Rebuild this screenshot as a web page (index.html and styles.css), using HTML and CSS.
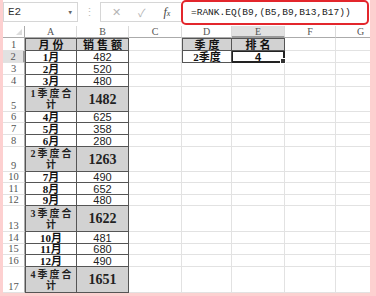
FILE: index.html
```html
<!DOCTYPE html>
<html lang="zh-CN">

<head>
    <meta charset="UTF-8">
    <title>RANK.EQ</title>
    <link rel="stylesheet" href="styles.css">
</head>

<body>
    <div class="frame">
        <div class="bar">
            <div class="namebox">E2<span class="arrow">▾</span></div>
            <div class="dots">⋮</div>
            <div class="fnbox">
                <span class="x">✕</span>
                <span class="ok">✓</span>
                <span class="fx">f<small>x</small></span>
            </div>
            <div class="formula">=RANK.EQ(B9,(B5,B9,B13,B17))</div>
        </div>

        <div class="sheet">
            <!-- header -->
            <div class="c hd corner"></div>
            <div class="c hd">A</div>
            <div class="c hd">B</div>
            <div class="c hd">C</div>
            <div class="c hd">D</div>
            <div class="c hd on">E</div>
            <div class="c hd">F</div>
            <div class="c hd">G</div>

            <div class="c rh">1</div>
            <div class="c t tl tt g cn"><span class="wide">月份</span></div>
            <div class="c t tt g cn"><span class="wide">销售额</span></div>
            <div class="c"></div>
            <div class="c t tl tt g cn"><span class="wide">季度</span></div>
            <div class="c t tt g cn"><span class="wide">排名</span></div>
            <div class="c"></div>
            <div class="c"></div>

            <div class="c rh on">2</div>
            <div class="c t tl cn">1月</div>
            <div class="c t num">482</div>
            <div class="c"></div>
            <div class="c t tl cn">2季度</div>
            <div class="c t num bold sel">4</div>
            <div class="c"></div>
            <div class="c"></div>

            <div class="c rh">3</div>
            <div class="c t tl cn">2月</div>
            <div class="c t num">520</div>
            <div class="c"></div>
            <div class="c"></div>
            <div class="c"></div>
            <div class="c"></div>
            <div class="c"></div>

            <div class="c rh">4</div>
            <div class="c t tl cn">3月</div>
            <div class="c t num">480</div>
            <div class="c"></div>
            <div class="c"></div>
            <div class="c"></div>
            <div class="c"></div>
            <div class="c"></div>

            <div class="c rh">5</div>
            <div class="c t tl g q"><span class="wide">1季度合</span><span>计</span></div>
            <div class="c t g tot">1482</div>
            <div class="c"></div>
            <div class="c"></div>
            <div class="c"></div>
            <div class="c"></div>
            <div class="c"></div>

            <div class="c rh">6</div>
            <div class="c t tl cn">4月</div>
            <div class="c t num">625</div>
            <div class="c"></div>
            <div class="c"></div>
            <div class="c"></div>
            <div class="c"></div>
            <div class="c"></div>

            <div class="c rh">7</div>
            <div class="c t tl cn">5月</div>
            <div class="c t num">358</div>
            <div class="c"></div>
            <div class="c"></div>
            <div class="c"></div>
            <div class="c"></div>
            <div class="c"></div>

            <div class="c rh">8</div>
            <div class="c t tl cn">6月</div>
            <div class="c t num">280</div>
            <div class="c"></div>
            <div class="c"></div>
            <div class="c"></div>
            <div class="c"></div>
            <div class="c"></div>

            <div class="c rh">9</div>
            <div class="c t tl g q"><span class="wide">2季度合</span><span>计</span></div>
            <div class="c t g tot">1263</div>
            <div class="c"></div>
            <div class="c"></div>
            <div class="c"></div>
            <div class="c"></div>
            <div class="c"></div>

            <div class="c rh">10</div>
            <div class="c t tl cn">7月</div>
            <div class="c t num">490</div>
            <div class="c"></div>
            <div class="c"></div>
            <div class="c"></div>
            <div class="c"></div>
            <div class="c"></div>

            <div class="c rh">11</div>
            <div class="c t tl cn">8月</div>
            <div class="c t num">652</div>
            <div class="c"></div>
            <div class="c"></div>
            <div class="c"></div>
            <div class="c"></div>
            <div class="c"></div>

            <div class="c rh">12</div>
            <div class="c t tl cn">9月</div>
            <div class="c t num">480</div>
            <div class="c"></div>
            <div class="c"></div>
            <div class="c"></div>
            <div class="c"></div>
            <div class="c"></div>

            <div class="c rh">13</div>
            <div class="c t tl g q"><span class="wide">3季度合</span><span>计</span></div>
            <div class="c t g tot">1622</div>
            <div class="c"></div>
            <div class="c"></div>
            <div class="c"></div>
            <div class="c"></div>
            <div class="c"></div>

            <div class="c rh">14</div>
            <div class="c t tl cn">10月</div>
            <div class="c t num">481</div>
            <div class="c"></div>
            <div class="c"></div>
            <div class="c"></div>
            <div class="c"></div>
            <div class="c"></div>

            <div class="c rh">15</div>
            <div class="c t tl cn">11月</div>
            <div class="c t num">680</div>
            <div class="c"></div>
            <div class="c"></div>
            <div class="c"></div>
            <div class="c"></div>
            <div class="c"></div>

            <div class="c rh">16</div>
            <div class="c t tl cn">12月</div>
            <div class="c t num">490</div>
            <div class="c"></div>
            <div class="c"></div>
            <div class="c"></div>
            <div class="c"></div>
            <div class="c"></div>

            <div class="c rh">17</div>
            <div class="c t tl g q"><span class="wide">4季度合</span><span>计</span></div>
            <div class="c t g tot">1651</div>
            <div class="c"></div>
            <div class="c"></div>
            <div class="c"></div>
            <div class="c"></div>
            <div class="c"></div>
        </div>
    </div>
</body>

</html>
```

FILE: styles.css
```css
body {
    margin: 0;
    background-color: #fdd0d0;
    font-family: "Liberation Sans", Arial, sans-serif;
}

.frame {
    width: 367px;
    height: 293px;
    margin-left: 3px;
    background-color: #fff;
    overflow: hidden;
}

/* formula bar */
.bar {
    display: flex;
    height: 26px;
}

.namebox {
    box-sizing: border-box;
    width: 75px;
    height: 20px;
    margin-top: 2px;
    padding: 0 4px;
    border: 1px solid #d6d6d6;
    display: flex;
    align-items: center;
    justify-content: space-between;
    font-family: "Liberation Mono", monospace;
    font-size: 11px;
    color: #333;
}

.arrow {
    font-size: 9px;
    color: #666;
}

.dots {
    width: 22px;
    text-align: center;
    line-height: 24px;
    font-size: 11px;
    color: #bbb;
}

.fnbox {
    box-sizing: border-box;
    width: 81px;
    height: 20px;
    margin-top: 2px;
    border: 1px solid #d6d6d6;
    border-right: none;
    display: flex;
    align-items: center;
    justify-content: space-around;
    padding: 0 2px;
    font-size: 11px;
    color: #b5b5b5;
}

.fx {
    font-family: "Liberation Serif", serif;
    font-style: italic;
    color: #444;
    font-size: 12px;
}

.fx small {
    font-size: 8px;
}

.formula {
    box-sizing: border-box;
    width: 188px;
    height: 25px;
    border: 2px solid #e3262c;
    border-radius: 5px;
    padding-left: 8px;
    display: flex;
    align-items: center;
    font-family: "Liberation Mono", monospace;
    font-size: 9.5px;
    color: #222;
    white-space: nowrap;
}

/* grid */
.sheet {
    display: grid;
    grid-template-columns: 22px 52px 52px 53px 50px 53px 51px 50px;
    grid-template-rows: 12px 13px 12px 12px 12px 25px 11px 12px 12px 25px 11px 12px 11px 26px 12px 11px 12px 26px;
}

.c {
    box-sizing: border-box;
    border-right: 1px solid #e2e2e2;
    border-bottom: 1px solid #e2e2e2;
    display: flex;
    align-items: flex-end;
    justify-content: center;
    white-space: nowrap;
    line-height: 11px;
}

.hd {
    align-items: center;
    background-color: #fff;
    border-bottom-color: #ababab;
    border-right-color: #dadada;
    font-family: "Liberation Serif", serif;
    font-size: 10px;
    color: #555;
}

.corner {
    position: relative;
    border-right-color: #ababab;
}

.corner::after {
    content: "";
    position: absolute;
    right: 2px;
    bottom: 2px;
    border-left: 6px solid transparent;
    border-bottom: 6px solid #dcdcdc;
}

.rh {
    border-right-color: #ababab;
    font-family: "Liberation Serif", serif;
    font-size: 10.5px;
    line-height: 10px;
    color: #555;
}

.hd.on,
.rh.on {
    background-color: #e1e1e1;
}

.hd.on {
    border-bottom: 2px solid #999;
}

.rh.on {
    border-right: 2px solid #999;
}

/* bordered table */
.t {
    border-right-color: #555;
    border-bottom-color: #555;
}

.tl {
    border-left: 1px solid #555;
}

.tt {
    border-top: 1px solid #555;
}

.g {
    background-color: #d2d2d2;
}

.cn {
    font-family: "Liberation Serif", "Noto Sans CJK SC", serif;
    font-weight: bold;
    font-size: 11px;
    line-height: 10px;
    color: #111;
}

.wide {
    letter-spacing: 3px;
    margin-right: -3px;
}

.num {
    font-size: 11px;
    line-height: 10px;
    color: #222;
}

.num.bold {
    font-weight: bold;
    color: #111;
}

.q {
    flex-direction: column;
    align-items: center;
    font-family: "Liberation Serif", "Noto Sans CJK SC", serif;
    font-weight: bold;
    font-size: 10px;
    line-height: 11px;
    color: #222;
}

.q .wide {
    letter-spacing: 2px;
    margin-right: -2px;
}

.tot {
    align-items: center;
    font-family: "Liberation Serif", serif;
    font-weight: bold;
    font-size: 14px;
    color: #222;
}

.sel {
    position: relative;
    box-shadow: inset 0 0 0 1px #222;
    border-color: #222;
}

.sel::after {
    content: "";
    position: absolute;
    right: -2px;
    bottom: -2px;
    width: 4px;
    height: 4px;
    background-color: #333;
    border: 1px solid #fff;
}
```
